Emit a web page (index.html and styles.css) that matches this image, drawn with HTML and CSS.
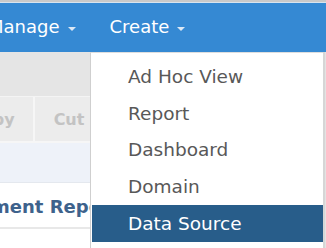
FILE: index.html
```html
<!DOCTYPE html>
<html>
<head>
<meta charset="utf-8">
<link rel="stylesheet" href="styles.css">
</head>
<body>
<div class="topstrip"></div>
<nav class="navbar">
  <div class="navitem first">Manage <span class="caret"></span></div>
  <div class="navitem">Create <span class="caret"></span></div>
</nav>
<main class="content">
  <div class="panel">
    <div class="graybar"></div>
    <div class="toolbar">
      <div class="tbtn">Copy</div>
      <div class="tbtn">Cut</div>
      <div class="tbtn empty"></div>
    </div>
    <div class="bluerow"></div>
    <div class="row"><span class="rowtext">Environment Report</span></div>
    <div class="row2"></div>
  </div>
  <ul class="dropdown">
    <li>Ad Hoc View</li>
    <li>Report</li>
    <li>Dashboard</li>
    <li>Domain</li>
    <li class="active">Data Source</li>
  </ul>
</main>
</body>
</html>
```
FILE: styles.css
```css
* { box-sizing: border-box; }
html, body { margin: 0; padding: 0; }
body {
  width: 326px;
  height: 248px;
  overflow: hidden;
  font-family: "DejaVu Sans", Verdana, sans-serif;
  background: #ffffff;
}
.topstrip {
  height: 3px;
  background: #c9c9c9;
  border-bottom: 1px solid #d8e4ee;
}
.navbar {
  height: 49px;
  background: #3589d3;
  display: flex;
  align-items: center;
  color: #ffffff;
  font-size: 18px;
  padding-bottom: 2px;
}
.navitem {
  display: flex;
  align-items: center;
  gap: 8px;
  margin-right: 34px;
  white-space: nowrap;
}
.navitem.first { margin-left: -12px; }
.caret {
  width: 0;
  height: 0;
  border-left: 4px solid transparent;
  border-right: 4px solid transparent;
  border-top: 4px solid #dbe8f5;
  margin-top: 5px;
}
.content {
  position: relative;
  height: 196px;
  background: #e3e3e3;
}
.panel {
  width: 91px;
  height: 100%;
  overflow: hidden;
  border-right: 1px solid #d0d0d0;
  display: flex;
  flex-direction: column;
}
.graybar {
  height: 45px;
  background: #e5e5e5;
  border-bottom: 1px solid #f4f4f4;
  flex: none;
}
.toolbar {
  height: 46px;
  display: flex;
  flex: none;
  margin-left: -49px;
  background: #e9e9e9;
  border-bottom: 2px solid #f6f6f6;
}
.tbtn {
  flex: none;
  background: #ececec;
  color: #c3c3c3;
  font-weight: bold;
  font-size: 16px;
  display: flex;
  align-items: center;
  justify-content: center;
  padding: 0 18px 0 19px;
  border-right: 2px solid #f6f6f6;
  white-space: nowrap;
}
.tbtn.empty { width: 40px; border-right: none; }
.bluerow {
  height: 40px;
  background: #eef2f9;
  border-bottom: 1px solid #e4e8ee;
  flex: none;
}
.row {
  height: 46px;
  background: #ffffff;
  border-bottom: 2px solid #e8e8e8;
  display: flex;
  align-items: center;
  flex: none;
  white-space: nowrap;
  margin-left: -86px;
  padding-top: 2px;
  font-weight: bold;
  font-size: 18px;
  color: #3e628c;
}
.row2 {
  flex: 1;
  background: #ffffff;
}
.dropdown {
  position: absolute;
  left: 90px;
  top: 0;
  width: 233px;
  height: 200px;
  margin: 0;
  padding: 5px 0 0 1px;
  list-style: none;
  background: #ffffff;
  border-left: 1px solid #cfcfcf;
  border-top: 1px solid #dedede;
  box-shadow: 2px 0 0 #d6d6d6;
  font-size: 18.5px;
  color: #585858;
}
.dropdown li {
  height: 36.8px;
  display: flex;
  align-items: center;
  padding-left: 36px;
  white-space: nowrap;
}
.dropdown li.active {
  background: #285d8a;
  color: #ffffff;
}
```
